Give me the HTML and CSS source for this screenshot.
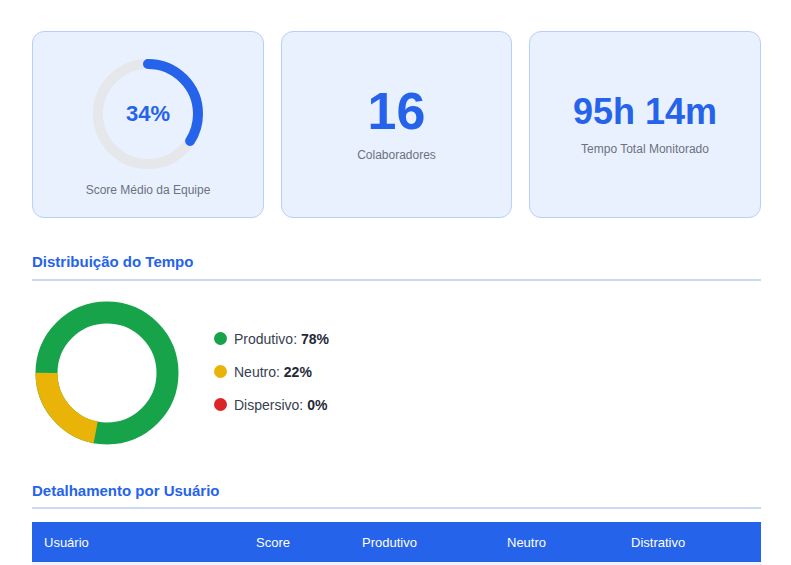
FILE: index.html
```html
<!DOCTYPE html>
<html lang="pt-BR">
<head>
<meta charset="utf-8">
<title>Relatório da Equipe</title>
<link rel="stylesheet" href="styles.css">
</head>
<body>
<main class="page">
  <section class="cards">
    <div class="card card-gauge">
      <div class="gauge">
        <svg width="110" height="110" viewBox="0 0 110 110">
          <circle cx="55" cy="55" r="50" fill="none" stroke="#e5e7eb" stroke-width="10"/>
          <circle cx="55" cy="55" r="50" fill="none" stroke="#2563eb" stroke-width="10" stroke-linecap="round" stroke-dasharray="106.8 314.16" transform="rotate(-90 55 55)"/>
        </svg>
        <span class="gauge-value">34%</span>
      </div>
      <div class="card-label">Score Médio da Equipe</div>
    </div>
    <div class="card card-count">
      <div class="big-number">16</div>
      <div class="card-label">Colaboradores</div>
    </div>
    <div class="card card-time">
      <div class="mid-number">95h 14m</div>
      <div class="card-label">Tempo Total Monitorado</div>
    </div>
  </section>

  <h2 class="section-title title-dist">Distribuição do Tempo</h2>
  <section class="distribution">
    <svg class="donut" width="144" height="144" viewBox="0 0 144 144">
      <circle cx="72" cy="72" r="60.5" fill="none" stroke="#16a34a" stroke-width="22"/>
      <circle cx="72" cy="72" r="60.5" fill="none" stroke="#eab308" stroke-width="22" stroke-dasharray="83.63 380.13" transform="rotate(100.8 72 72)"/>
    </svg>
    <ul class="legend">
      <li class="legend-item"><span class="dot dot-green"></span>Produtivo: <b>78%</b></li>
      <li class="legend-item"><span class="dot dot-yellow"></span>Neutro: <b>22%</b></li>
      <li class="legend-item"><span class="dot dot-red"></span>Dispersivo: <b>0%</b></li>
    </ul>
  </section>

  <h2 class="section-title title-users">Detalhamento por Usuário</h2>
  <table class="users">
    <colgroup>
      <col class="c1"><col class="c2"><col class="c3"><col class="c4"><col class="c5">
    </colgroup>
    <thead>
      <tr><th>Usuário</th><th>Score</th><th>Produtivo</th><th>Neutro</th><th>Distrativo</th></tr>
    </thead>
    <tbody>
      <tr class="row-alt"><td></td><td></td><td></td><td></td><td></td></tr>
    </tbody>
  </table>
</main>
</body>
</html>
```

FILE: styles.css
```css
* { box-sizing: border-box; }
html, body { margin: 0; padding: 0; background: #ffffff; }
body {
  font-family: "Liberation Sans", Arial, sans-serif;
  color: #374151;
  overflow: hidden;
}
.page {
  padding: 31px 30px 0 32px;
}
.cards {
  display: grid;
  grid-template-columns: 232px 231px 232px;
  column-gap: 17px;
}
.card {
  background: #eaf1fe;
  border: 1px solid #b9cff8;
  border-radius: 12px;
  display: flex;
  flex-direction: column;
  align-items: center;
  justify-content: center;
  height: 187px;
}
.card-label {
  font-size: 12px;
  line-height: 14px;
  color: #6b7280;
}
.card-gauge { padding-top: 7px; }
.gauge {
  position: relative;
  width: 110px;
  height: 110px;
  margin-bottom: 14px;
}
.gauge svg { display: block; }
.gauge-value {
  position: absolute;
  inset: 0;
  display: flex;
  align-items: center;
  justify-content: center;
  font-size: 22px;
  font-weight: 700;
  color: #2563eb;
}
.card-count { padding-bottom: 2px; }
.card-time { padding-top: 1px; }
.big-number {
  font-size: 52px;
  line-height: 1;
  font-weight: 700;
  color: #2563eb;
  margin-bottom: 11px;
}
.mid-number {
  font-size: 36px;
  line-height: 1;
  font-weight: 700;
  color: #2563eb;
  margin-bottom: 12px;
}
.section-title {
  margin: 0;
  font-size: 15px;
  line-height: 17px;
  font-weight: 700;
  color: #2563eb;
  padding-bottom: 9px;
  border-bottom: 2px solid #c9d8f7;
}
.title-dist { margin-top: 35px; }
.distribution {
  display: flex;
  align-items: center;
  margin-top: 20px;
  padding-left: 3px;
}
.donut { display: block; }
.legend {
  list-style: none;
  margin: 0 0 0 35px;
  padding: 0 0 3px 0;
  display: flex;
  flex-direction: column;
  gap: 17px;
}
.legend-item {
  display: flex;
  align-items: center;
  font-size: 14px;
  line-height: 16px;
  color: #374151;
  white-space: pre;
}
.legend-item b { color: #1f2937; }
.dot {
  width: 13px;
  height: 13px;
  border-radius: 50%;
  margin-right: 7px;
}
.dot-green { background: #16a34a; }
.dot-yellow { background: #eab308; }
.dot-red { background: #dc2626; }
.title-users { margin-top: 37px; padding-bottom: 8px; }
.users {
  width: 729px;
  margin-top: 13px;
  border-collapse: collapse;
  table-layout: fixed;
}
.c1 { width: 212px; }
.c2 { width: 106px; }
.c3 { width: 145px; }
.c4 { width: 124px; }
.c5 { width: 142px; }
.users th {
  background: #2563eb;
  color: #ffffff;
  font-size: 13px;
  font-weight: 500;
  text-align: left;
  height: 40px;
  padding: 0 12px;
}
.users td {
  height: 40px;
  padding: 0 12px;
}
.row-alt { background: #eef4ff; }
```
